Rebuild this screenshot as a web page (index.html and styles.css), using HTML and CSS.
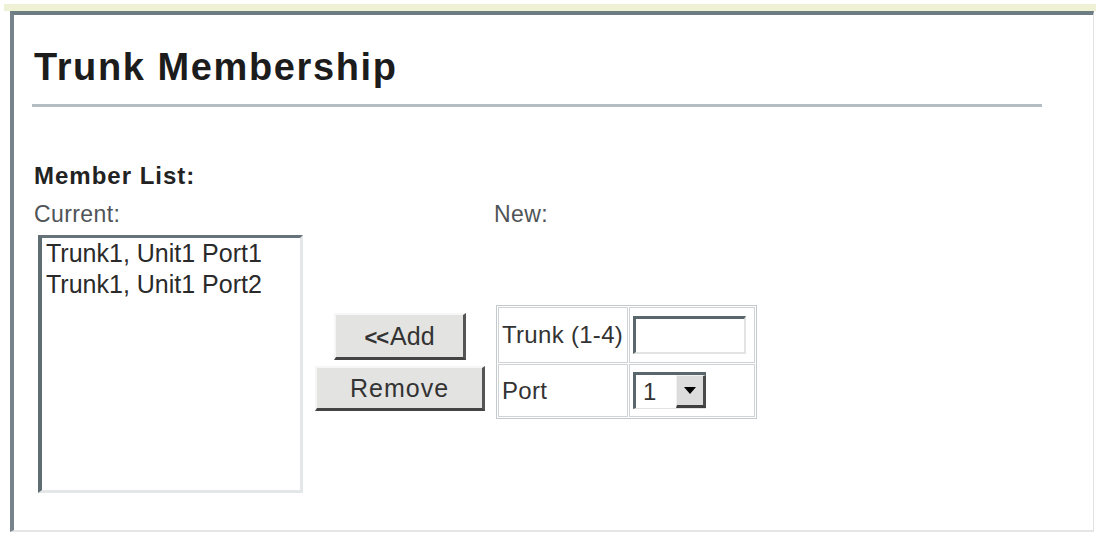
FILE: index.html
```html
<!DOCTYPE html>
<html lang="en">
<head>
<meta charset="utf-8">
<title>Trunk Membership</title>
<link rel="stylesheet" href="styles.css">
</head>
<body>
<div class="band"></div>
<div class="frame">
  <h1 class="title">Trunk Membership</h1>
  <div class="rule"></div>
  <div class="section-label">Member List:</div>
  <div class="members">
    <div class="label">Current:</div>
    <div></div>
    <div class="label label-new">New:</div>

    <div class="listbox">
      <div class="option">Trunk1, Unit1 Port1</div>
      <div class="option">Trunk1, Unit1 Port2</div>
    </div>

    <div class="actions">
      <button class="btn btn-add" type="button"><span class="chev">&lt;&lt;</span>Add</button>
      <button class="btn btn-remove" type="button">Remove</button>
    </div>

    <div class="form-cell">
      <table class="new-form">
        <tr class="row-trunk">
          <td class="key">Trunk (1-4)</td>
          <td class="val"><input class="text" type="text"></td>
        </tr>
        <tr class="row-port">
          <td class="key">Port</td>
          <td class="val">
            <div class="select">
              <span class="select-value">1</span>
              <span class="select-btn"><span class="arrow"></span></span>
            </div>
          </td>
        </tr>
      </table>
    </div>
  </div>
</div>
</body>
</html>
```

FILE: styles.css
```css
* {
  box-sizing: border-box;
}

html,
body {
  margin: 0;
  padding: 0;
  background: #fff;
}

body {
  width: 1096px;
  height: 536px;
  overflow: hidden;
  font-family: "Liberation Sans", Arial, sans-serif;
  color: #222;
}

/* thin tinted strip above the panel */
.band {
  height: 7px;
  margin: 4px 0 0 4px;
  background: #eff1d4;
}

/* main panel */
.frame {
  margin-left: 10px;
  width: 1084px;
  height: 521px;
  border-top: 4px solid #6e7c83;
  border-left: 4px solid #76838a;
  border-right: 1px solid #dfe2e2;
  border-bottom: 2px solid #e4e6e6;
  padding: 30px 0 0 20px;
}

.title {
  margin: 0;
  font-size: 38px;
  line-height: 44px;
  font-weight: bold;
  letter-spacing: 1.6px;
  color: #1c1c1c;
}

.rule {
  margin: 15px 0 0 -2px;
  width: 1010px;
  height: 3px;
  background: #b3bdc2;
}

.section-label {
  margin-top: 55px;
  font-size: 24px;
  line-height: 28px;
  font-weight: bold;
  letter-spacing: 1px;
  color: #222;
}

/* current list / buttons / new entry */
.members {
  margin-top: 11px;
  display: grid;
  grid-template-columns: 270px 192px auto;
  row-gap: 8px;
}

.label {
  font-size: 23px;
  line-height: 26px;
  letter-spacing: 0.4px;
  color: #505458;
}

.label-new {
  margin-left: -2px;
}

.listbox {
  margin-left: 4px;
  width: 265px;
  height: 258px;
  border-top: 3px solid #66737a;
  border-left: 4px solid #5f6c72;
  border-right: 3px solid #e4e7e7;
  border-bottom: 3px solid #e4e7e7;
  padding: 0 0 0 4px;
  background: #fff;
  font-size: 25px;
  line-height: 31px;
  color: #2a2a2a;
}

.actions {
  display: flex;
  flex-direction: column;
  align-items: center;
  justify-content: center;
  gap: 6px;
  padding-bottom: 4px;
}

.btn {
  padding: 0;
  font-family: inherit;
  font-size: 25px;
  color: #333;
  background: #e3e3e1;
  border-style: solid;
  border-width: 2px 3px 3px 2px;
  border-color: #f6f6f6 #555 #444 #f6f6f6;
}

.btn-add {
  width: 132px;
  height: 47px;
}

.chev {
  font-weight: bold;
  font-size: 22px;
  letter-spacing: -1px;
  margin-right: 2px;
}

.btn-remove {
  width: 170px;
  height: 45px;
  letter-spacing: 1px;
}

.form-cell {
  display: flex;
  align-items: center;
  padding-bottom: 4px;
}

.new-form {
  border-collapse: separate;
  border-spacing: 1px;
  border: 1px solid #c4c9cc;
}

.new-form td {
  padding: 0;
  border: 1px solid #cfd3d5;
  vertical-align: middle;
  font-size: 24px;
  color: #333;
}

.new-form .key {
  width: 130px;
  padding-left: 3px;
  letter-spacing: 0.3px;
}

.new-form .val {
  width: 126px;
}

.row-trunk td {
  height: 56px;
}

.row-port td {
  height: 53px;
}

.text {
  display: block;
  width: 113px;
  height: 38px;
  margin-left: 3px;
  padding: 0;
  background: #fff;
  border-style: solid;
  border-width: 3px 2px 2px 3px;
  border-color: #59666c #e2e4e4 #e2e4e4 #59666c;
}

/* drop-down box */
.select {
  display: flex;
  width: 73px;
  height: 37px;
  margin-left: 3px;
  border-top: 3px solid #59666c;
  border-left: 3px solid #59666c;
  border-bottom: 1px solid #e2e4e4;
  background: #fff;
}

.select-value {
  flex: 1;
  padding-left: 7px;
  font-size: 24px;
  line-height: 33px;
  color: #333;
}

.select-btn {
  display: flex;
  align-items: center;
  justify-content: center;
  width: 30px;
  background: #dcdcdc;
  border-top: 1px solid #f0f0f0;
  border-left: 1px solid #f0f0f0;
  border-right: 3px solid #4a4a4a;
  border-bottom: 3px solid #3f3f3f;
}

.arrow {
  width: 0;
  height: 0;
  border-left: 6px solid transparent;
  border-right: 6px solid transparent;
  border-top: 7px solid #000;
}
```
